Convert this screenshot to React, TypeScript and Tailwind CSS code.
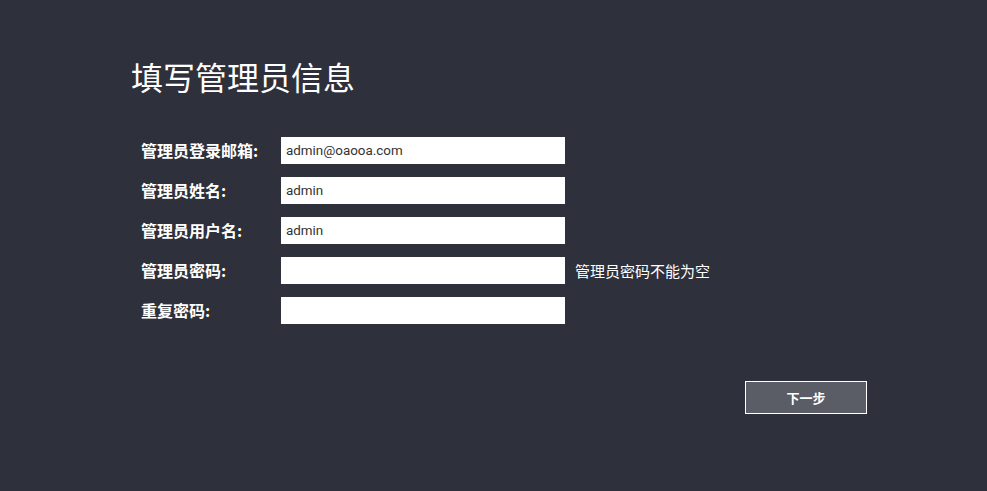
import React from "react";

const rows: { label: string; value: string; type?: string; error?: string }[] = [
  { label: "管理员登录邮箱:", value: "admin@oaooa.com" },
  { label: "管理员姓名:", value: "admin" },
  { label: "管理员用户名:", value: "admin" },
  { label: "管理员密码:", value: "", type: "password", error: "管理员密码不能为空" },
  { label: "重复密码:", value: "", type: "password" },
];

export default function App() {
  return (
    <div
      className="w-[987px] h-[491px] bg-[#2e303b] text-white overflow-hidden"
      style={{ fontFamily: '"Noto Sans CJK SC", "Noto Sans", sans-serif' }}
    >
      <div className="pl-[131px] pt-[56px]">
        <h1 className="text-[32px] leading-[40px] font-normal">填写管理员信息</h1>
      </div>
      <div className="pl-[141px] pt-[41px] flex flex-col gap-[13px]">
        {rows.map((r) => (
          <div key={r.label} className="flex items-center h-[27px]">
            <div className="w-[140px] text-[16px] font-bold leading-[27px]">{r.label}</div>
            <input
              type={r.type ?? "text"}
              defaultValue={r.value}
              className="w-[284px] h-[27px] bg-white text-[#333] text-[13.4px] px-[5px] outline-none border-0"
              style={{ fontFamily: 'Roboto, "Noto Sans", sans-serif' }}
            />
            {r.error && (
              <span className="ml-[10px] text-[15px] leading-[27px] text-white">{r.error}</span>
            )}
          </div>
        ))}
      </div>
      <div className="flex justify-end pr-[120px] pt-[57px]">
        <button className="w-[122px] h-[33px] bg-[#5b5d66] border border-white text-[13px] font-bold text-white">
          下一步
        </button>
      </div>
    </div>
  );
}
